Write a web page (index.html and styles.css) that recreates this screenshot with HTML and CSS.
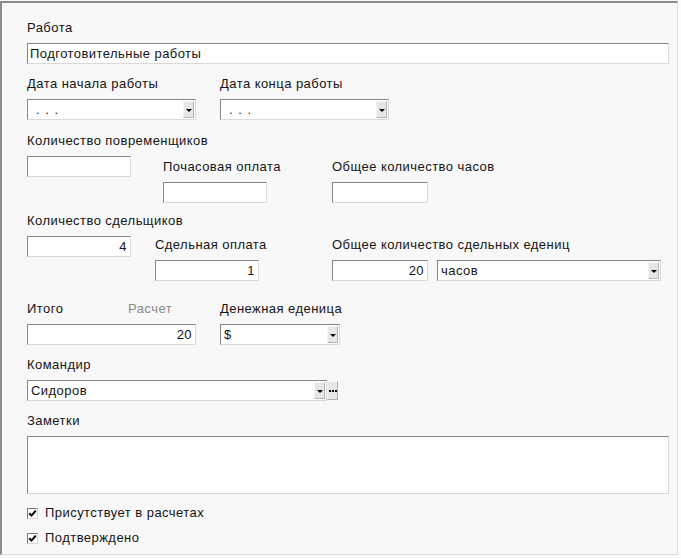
FILE: index.html
```html
<!DOCTYPE html>
<html lang="ru">
<head>
<meta charset="utf-8">
<title>Работа</title>
<link rel="stylesheet" href="styles.css">
</head>
<body>
<div class="frame">
  <div class="field">
    <div class="lbl">Работа</div>
    <div class="box w-full">Подготовительные работы</div>
  </div>

  <div class="row dates">
    <div class="field">
      <div class="lbl">Дата начала работы</div>
      <div class="select w-date"><span class="val dots">. . .</span><span class="drop"><i></i></span></div>
    </div>
    <div class="field gap24">
      <div class="lbl">Дата конца работы</div>
      <div class="select w-date"><span class="val dots">. . .</span><span class="drop"><i></i></span></div>
    </div>
  </div>

  <div class="row group1">
    <div class="field w104">
      <div class="lbl nowrap">Количество повременщиков</div>
      <div class="box w104"></div>
    </div>
    <div class="field w104 c2a">
      <div class="lbl nowrap">Почасовая оплата</div>
      <div class="box w104"></div>
    </div>
    <div class="field c3a">
      <div class="lbl nowrap">Общее количество часов</div>
      <div class="box w95"></div>
    </div>
  </div>

  <div class="row group2">
    <div class="field w104">
      <div class="lbl nowrap">Количество сдельщиков</div>
      <div class="box w104 num">4</div>
    </div>
    <div class="field w104 c2b">
      <div class="lbl nowrap">Сдельная оплата</div>
      <div class="box w104 num">1</div>
    </div>
    <div class="field c3b">
      <div class="lbl nowrap">Общее количество сдельных едениц</div>
      <div class="pair">
        <div class="box w95 num">20</div>
        <div class="select w-unit"><span class="val">часов</span><span class="drop"><i></i></span></div>
      </div>
    </div>
  </div>

  <div class="row group3">
    <div class="field">
      <div class="lbl split"><span class="lbl-a">Итого</span><span class="muted">Расчет</span></div>
      <div class="box w-total num">20</div>
    </div>
    <div class="field gap24">
      <div class="lbl">Денежная еденица</div>
      <div class="select w-cur"><span class="val">$</span><span class="drop"><i></i></span></div>
    </div>
  </div>

  <div class="field sect">
    <div class="lbl">Командир</div>
    <div class="pair tight">
      <div class="select w-cmd"><span class="val">Сидоров</span><span class="drop"><i></i></span></div>
      <span class="more"><b></b><b></b><b></b></span>
    </div>
  </div>

  <div class="field sect">
    <div class="lbl">Заметки</div>
    <div class="box w-full notes"></div>
  </div>

  <div class="checks">
    <label class="check"><span class="cb"><svg width="9" height="9" viewBox="0 0 9 9"><path d="M1.3 4.2 L3.5 6.6 L7.8 1.6" fill="none" stroke="#000" stroke-width="2"/></svg></span>Присутствует в расчетах</label>
    <label class="check"><span class="cb"><svg width="9" height="9" viewBox="0 0 9 9"><path d="M1.3 4.2 L3.5 6.6 L7.8 1.6" fill="none" stroke="#000" stroke-width="2"/></svg></span>Подтверждено</label>
  </div>
</div>
</body>
</html>
```

FILE: styles.css
```css
* { box-sizing: border-box; }

html, body {
  margin: 0;
  padding: 0;
  background: #fbfbfb;
}

body {
  font-family: "Liberation Sans", Arial, sans-serif;
  font-size: 13px;
  letter-spacing: 0.45px;
  color: #151515;
}

.frame {
  margin: 1px 3px 3px 0;
  height: 554px;
  background: #f8f8f8;
  border-top: 2px solid #8c8c8c;
  border-left: 2px solid #8c8c8c;
  border-right: 1px solid #dcdcdc;
  border-bottom: 1px solid #dcdcdc;
  padding: 17px 0 0 25px;
}

.field { display: flex; flex-direction: column; }

.lbl {
  height: 16px;
  line-height: 16px;
  margin-bottom: 7px;
  white-space: nowrap;
}

.nowrap { white-space: nowrap; }

.box, .select {
  height: 21px;
  background: #fff;
  border-top: 1px solid #858585;
  border-left: 1px solid #858585;
  border-right: 1px solid #d9d9d9;
  border-bottom: 1px solid #d9d9d9;
  line-height: 19px;
  padding: 0 2px;
  white-space: nowrap;
  overflow: hidden;
}

.num { text-align: right; padding-right: 3px; }

.w-full { width: 642px; }
.w104 { width: 104px; }
.w95 { width: 96px; }
.w-date { width: 169px; }
.w-unit { width: 224px; }
.w-total { width: 169px; }
.w-cur { width: 120px; }
.w-cmd { width: 300px; }

.select {
  display: flex;
  align-items: center;
  padding: 0 0 0 3px;
}

.select .val { flex: 1; line-height: 19px; }
.select .dots { padding-left: 5px; letter-spacing: 1px; }

.drop {
  width: 11px;
  height: 17px;
  background: #e6e6e6;
  border: 1px solid #f4f4f4;
  border-right-color: #b4b4b4;
  border-bottom-color: #b4b4b4;
  display: flex;
  align-items: center;
  justify-content: center;
  margin-right: 1px;
}

.drop i {
  display: block;
  width: 0;
  height: 0;
  border-left: 3px solid transparent;
  border-right: 3px solid transparent;
  border-top: 3px solid #000;
  margin-top: 1px;
}

.row { display: flex; align-items: flex-start; }

.dates { margin-top: 12px; }
.gap24 { margin-left: 24px; }

.group1 { margin-top: 13px; }
.c2a { margin-left: 32px; margin-top: 26px; }
.c3a { margin-left: 65px; margin-top: 26px; }

.group2 { margin-top: 10px; }
.c2b { margin-left: 24px; margin-top: 24px; }
.c3b { margin-left: 73px; margin-top: 24px; }

.pair { display: flex; gap: 9px; }
.pair.tight { gap: 0; }

.group3 { margin-top: 20px; }
.split { display: flex; }
.lbl-a { width: 101px; }
.muted { color: #8a8a8a; }

.sect { margin-top: 12px; }

.more {
  width: 11px;
  height: 19px;
  margin-top: 1px;
  background: #e6e6e6;
  border: 1px solid #f4f4f4;
  border-right-color: #b0b0b0;
  border-bottom-color: #b0b0b0;
  display: flex;
  align-items: center;
  justify-content: center;
  gap: 1px;
}

.more b {
  display: block;
  width: 2px;
  height: 2px;
  background: #000;
}

.notes { height: 58px; }

.checks { margin-top: 11px; display: flex; flex-direction: column; gap: 9px; }

.check {
  display: flex;
  align-items: center;
  height: 16px;
  line-height: 16px;
}

.cb {
  width: 11px;
  height: 11px;
  background: #fff;
  border-top: 1px solid #7a7a7a;
  border-left: 1px solid #7a7a7a;
  border-right: 1px solid #d8d8d8;
  border-bottom: 1px solid #d8d8d8;
  margin-right: 7px;
  display: flex;
  align-items: center;
  justify-content: center;
}
```
